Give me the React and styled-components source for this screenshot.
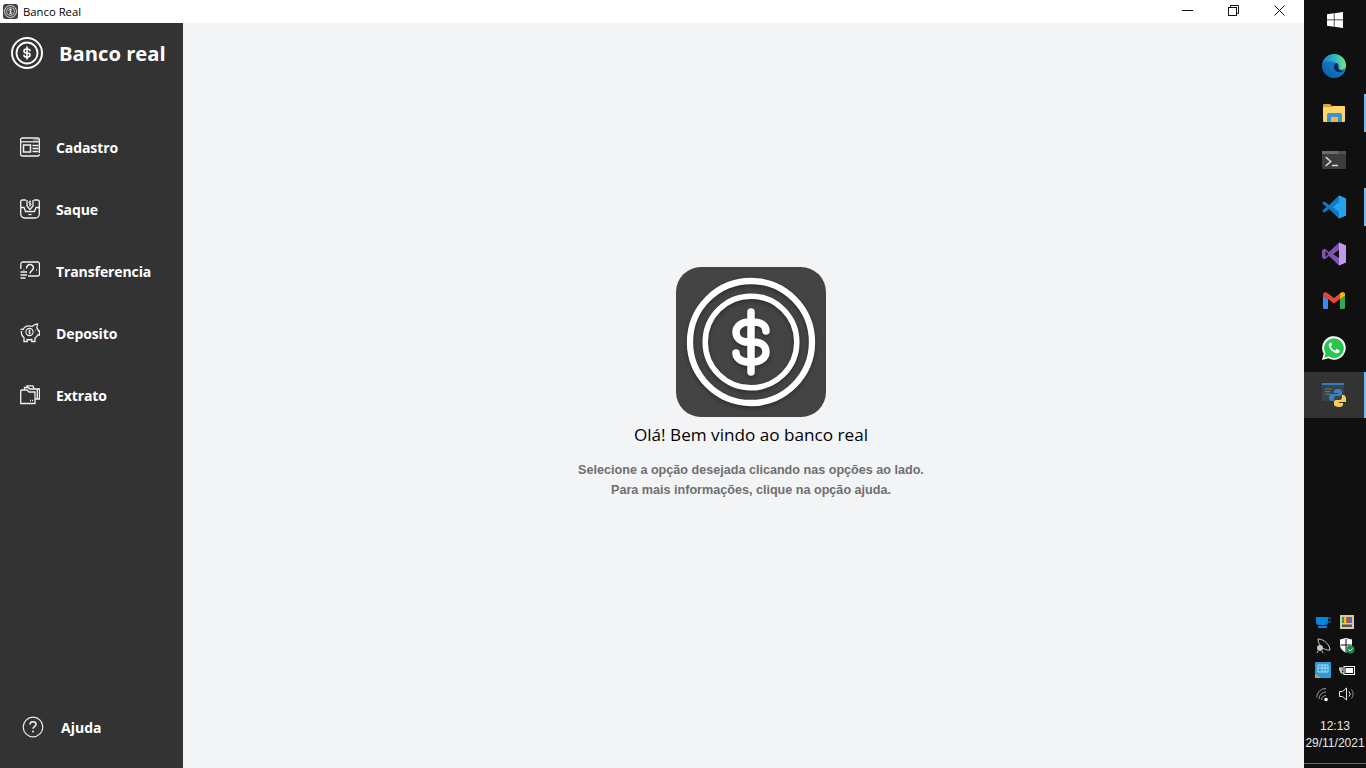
import React from "react";
import styled, { createGlobalStyle } from "styled-components";

const GlobalStyle = createGlobalStyle`
  html, body {
    margin: 0;
    padding: 0;
    width: 1366px;
    height: 768px;
    overflow: hidden;
  }
  * { box-sizing: border-box; }
`;

const Desktop = styled.div`
  display: flex;
  width: 1366px;
  height: 768px;
  font-family: "Open Sans", "Liberation Sans", sans-serif;
`;

const Window = styled.div`
  display: flex;
  flex-direction: column;
  flex: 1;
  min-width: 0;
`;

const TitleBar = styled.div`
  display: flex;
  align-items: center;
  height: 23px;
  padding: 0 2px 0 3px;
  background: #fff;
`;

const TitleIcon = styled.svg`
  width: 15px;
  height: 15px;
  margin-right: 5px;
`;

const TitleText = styled.span`
  flex: 1;
  font-size: 11.3px;
  color: #000;
`;

const WinButton = styled.div`
  display: flex;
  align-items: center;
  justify-content: center;
  width: 46px;
  height: 23px;
  margin-top: -3px;
`;

const WinGlyph = styled.svg`
  width: 11px;
  height: 11px;
  fill: none;
  stroke: #111;
`;

const Body = styled.div`
  display: flex;
  flex: 1;
  min-height: 0;
`;

const Sidebar = styled.aside`
  display: flex;
  flex-direction: column;
  width: 183px;
  background: #333333;
  color: #fff;
`;

const Brand = styled.div`
  display: flex;
  align-items: center;
  gap: 16px;
  height: 60px;
  padding-left: 11px;
  font-size: 20.2px;
  font-weight: 700;
  margin-bottom: 33px;
`;

const Nav = styled.nav`
  display: flex;
  flex-direction: column;
  flex: 1;
`;

const NavItem = styled.div`
  display: flex;
  align-items: center;
  gap: 16px;
  height: 62px;
  padding-left: 20px;
  font-size: 14px;
  font-weight: 700;
  letter-spacing: -0.1px;
`;

const Help = styled.div`
  display: flex;
  align-items: center;
  gap: 17px;
  height: 62px;
  margin-bottom: 10px;
  padding-left: 22px;
  font-size: 14px;
  font-weight: 700;
`;

const Main = styled.main`
  display: flex;
  flex-direction: column;
  align-items: center;
  flex: 1;
  padding: 244px 0 0 15px;
  background: #f3f4f6;
`;

const LogoTile = styled.div`
  width: 150px;
  height: 150px;
  border-radius: 25px;
  background: #444444;
`;

const Heading = styled.h1`
  margin: 6px 0 14px;
  font-size: 17.150px;
  line-height: 23px;
  font-weight: 400;
  color: #000;
`;

const Sub = styled.p`
  margin: 0;
  font-family: "Liberation Sans", sans-serif;
  font-size: 12.6px;
  line-height: 20px;
  font-weight: 700;
  color: #6f6f6f;
  text-align: center;
`;

const Taskbar = styled.div`
  display: flex;
  flex-direction: column;
  width: 62px;
  background: #101010;
  position: relative;
`;

const StartSlot = styled.div`
  display: flex;
  align-items: center;
  justify-content: center;
  height: 42px;
  padding-bottom: 3px;
`;

const Slot = styled.div`
  display: flex;
  align-items: center;
  justify-content: center;
  height: ${(p) => (p.$active ? "46px" : "47px")};
  margin-top: ${(p) => (p.$active ? "1px" : "0")};
  background: ${(p) => (p.$active ? "#333333" : "transparent")};
  border-right: 2px solid transparent;
  position: relative;
  &::after {
    content: "";
    display: ${(p) => (p.$open ? "block" : "none")};
    position: absolute;
    right: -2px;
    top: ${(p) => (p.$active ? "0" : "5px")};
    bottom: ${(p) => (p.$active ? "0" : "4px")};
    width: 2px;
    background: #76b9ed;
  }
`;

const Tray = styled.div`
  display: grid;
  grid-template-columns: 24px 24px;
  grid-auto-rows: 24px;
  justify-content: center;
  justify-items: center;
  align-items: center;
  margin-top: auto;
`;

const Clock = styled.div`
  margin-top: 12px;
  margin-bottom: 16px;
  text-align: center;
  font-family: "Liberation Sans", sans-serif;
  font-size: 12px;
  line-height: 17px;
  color: #e8e8e8;
  white-space: nowrap;
`;

const DesktopEdge = styled.div`
  position: absolute;
  left: 0;
  right: 0;
  bottom: 4px;
  height: 1px;
  background: #6a6a6a;
`;

const DOLLAR =
  "M90 64C90 58 84 55 77 55H73C65 55 60 60 60 65 60 71 65 75 72 75H78C85 75 90 79 90 85 90 90 85 95 77 95H73C65 95 60 91 60 86M75 45V105";

const CoinSmall = () => (
  <svg width="32" height="32" viewBox="0 0 32 32" fill="none" stroke="#fff">
    <circle cx="16" cy="16" r="15" strokeWidth="2" />
    <circle cx="16" cy="16" r="10.5" strokeWidth="1.8" />
    <path
      d={DOLLAR}
      transform="translate(16 16) scale(.2) translate(-75 -75)"
      strokeWidth="8"
      strokeLinecap="round"
    />
  </svg>
);

const CoinLarge = () => (
  <svg width="150" height="150" viewBox="0 0 150 150" fill="none" stroke="#fff">
    <g style={{ filter: "drop-shadow(0 2px 2px rgba(0,0,0,.35))" }}>
      <circle cx="75" cy="75" r="61" strokeWidth="6.3" />
      <circle cx="75" cy="75" r="45.800" strokeWidth="5.500" />
      <path d={DOLLAR} strokeWidth="7.500" strokeLinecap="round" />
    </g>
  </svg>
);

const MiniLogo = () => (
  <TitleIcon viewBox="0 0 15 15">
    <rect width="15" height="15" rx="2.500" fill="#444" />
    <g fill="none" stroke="#ddd">
      <circle cx="7.500" cy="7.500" r="6" strokeWidth="1" />
      <circle cx="7.500" cy="7.500" r="4" strokeWidth=".8" />
    </g>
    <path d="M7.500 4.500v6M9 6c-1-1-3-.8-3 .4s3 1 3 2.200-2 1.400-3 .4" fill="none" stroke="#eee" strokeWidth=".8" />
  </TitleIcon>
);

const NavIcon = styled.svg`
  width: 20px;
  height: 20px;
  fill: none;
  stroke: #f2f2f2;
  stroke-width: 1.300;
  flex: none;
`;

const CadastroIcon = () => (
  <NavIcon viewBox="0 0 20 20">
    <path d="M19.400 16V2.800A1.800 1.800 0 0 0 17.600 1H2.400A1.800 1.800 0 0 0 .6 2.800v14.400A1.800 1.800 0 0 0 2.400 19h15.200a1.800 1.800 0 0 0 1.800-1.800" />
    <path d="M.6 4.800h18.800" />
    <path d="M13.500 2.900h1M15.500 2.900h1M17.300 2.900h1" />
    <rect x="3.500" y="8" width="7" height="7" strokeWidth="1.500" />
    <path d="M12.500 8.500h6M12.500 11.500h6M12.500 14.500h6" strokeWidth="1.400" />
  </NavIcon>
);

const SaqueIcon = () => (
  <NavIcon viewBox="0 0 20 20">
    <path d="M6 1H2.500A1.800 1.800 0 0 0 .7 2.800V15a4 4 0 0 0 4 4h10.600a4 4 0 0 0 4-4V2.800A1.800 1.800 0 0 0 17.500 1H14" />
    <path d="M.7 8.500H4l1.500 4h9l1.500-4h3.300" />
    <path d="M7 1v6l3 3.500L13 7V1" />
    <path d="M11.200 3c-.8-.8-2.400-.5-2.400.5s2.400.8 2.400 1.800-1.600 1.200-2.400.5M10 1.500v6" strokeWidth="1" />
    <path d="M8.500 15.500h3" />
  </NavIcon>
);

const TransferIcon = () => (
  <NavIcon viewBox="0 0 20 20">
    <path d="M.8 8V3a2 2 0 0 1 2-2h14.700a2 2 0 0 1 2 2v10a2 2 0 0 1-2 2H8" />
    <path d="M6.700 7.500a3.300 3.300 0 0 1 3.300-4 3.300 3.300 0 0 1 3.400 3.500c0 2.200-3.400 2.800-3.400 5.500" strokeWidth="1.500" />
    <path d="M3.500 9h.8M16.200 9h.8" strokeWidth="1.400" />
    <path d="M.5 11h6.500M.5 14h6.500M.5 17h5" strokeWidth="1.500" />
  </NavIcon>
);

const DepositoIcon = () => (
  <NavIcon viewBox="0 0 20 20">
    <path d="M3 6.500C5 3 9 2.500 12 3.500 13.500 2 16 1 17.500.8l-.7 4.200c.8.8 1.400 1.800 1.700 3h1v4h-1.800c-.6 1.300-1.500 2.200-2.700 3v3.500h-3.200v-2c-1.400.3-3.200.3-4.600 0v2H4v-3.800C2 13 1 10.500 1.500 8" />
    <path d="M.5 6c1 .5 2 .5 3 .5" />
    <circle cx="9.500" cy="9" r="3.600" strokeWidth="1.100" />
    <path d="M10.700 7.800c-.6-.5-2.200-.4-2.200.5s2.200.7 2.200 1.600-1.600 1-2.200.5M9.500 6.500v5" strokeWidth=".8" />
    <path d="M15 7.300h.6" />
  </NavIcon>
);

const ExtratoIcon = () => (
  <NavIcon viewBox="0 0 20 20">
    <path d="M.7 18.500V6a1 1 0 0 1 1-1H7l2 2h6v11.500z" />
    <path d="M4.500 5V2.500h4l1.200 1.500h9.800v10H15" />
    <path d="M7 2.500V.8h6l1 3.200" />
    <path d="M17.300 4v10" />
    <path d="M10 15.500h1M12 15.500h1" />
  </NavIcon>
);

const HelpIcon = () => (
  <svg width="22" height="22" viewBox="0 0 22 22" fill="none" stroke="#eee">
    <circle cx="11" cy="11" r="9.800" strokeWidth="1.200" />
    <path d="M8 8.500a3 3 0 0 1 3-2.700c1.800 0 3 1.100 3 2.500 0 2.200-3 2.400-3 4.500" strokeWidth="1.600" />
    <circle cx="11" cy="15.500" r="1" fill="#eee" stroke="none" />
  </svg>
);

const WindowsLogo = () => (
  <svg width="16" height="16" viewBox="0 0 16 16" fill="#fff">
    <path d="M0 2.300 6.800 1.300v6.300H0zM7.500 1.200 16 0v7.600H7.500zM0 8.300h6.800v6.400L0 13.700zM7.500 8.300H16V16l-8.500-1.200z" />
  </svg>
);

const EdgeIcon = () => (
  <svg width="24" height="24" viewBox="0 0 24 24">
    <defs>
      <linearGradient id="edgeA" x1="0" y1="1" x2="1" y2="0">
        <stop offset="0" stopColor="#0a55a0" />
        <stop offset="1" stopColor="#1f9be3" />
      </linearGradient>
      <linearGradient id="edgeB" x1="0" y1="0.5" x2="1" y2="0.5">
        <stop offset="0" stopColor="#1a78c8" />
        <stop offset=".6" stopColor="#35c0c0" />
        <stop offset="1" stopColor="#84e36a" />
      </linearGradient>
    </defs>
    <circle cx="12" cy="12" r="12" fill="url(#edgeA)" />
    <path d="M.3 10C1.500 4 6.500 0 12 0c6.500 0 12 5 12 11.500 0 2.500-2 4-4.500 4-1 0-2-.3-2.500-.8 1-1.500.5-3.700-1-5C13 7.500 5 5.500.3 10z" fill="url(#edgeB)" />
    <path d="M15 9C12 9.500 11 13 13 16 15 19 19 19 22 16.500 19 17 16.500 16 16 14 15.500 12 16.500 11 15 9z" fill="#0c2350" />
  </svg>
);

const FolderIcon = () => (
  <svg width="22" height="18" viewBox="0 0 22 18">
    <path d="M0 1a1 1 0 0 1 1-1h6l2 2h12a1 1 0 0 1 1 1v2H0z" fill="#d9a130" />
    <path d="M0 3h9l1-1h11a1 1 0 0 1 1 1v14a1 1 0 0 1-1 1H1a1 1 0 0 1-1-1z" fill="#fbd768" />
    <path d="M4 18V11a2 2 0 0 1 2-2h11a2 2 0 0 1 2 2v7z" fill="#3f8fd8" />
    <rect x="8" y="13" width="7" height="5" fill="#f3b63d" />
  </svg>
);

const TerminalIcon = () => (
  <svg width="24" height="18" viewBox="0 0 24 18">
    <rect width="24" height="18" rx="1" fill="#3c3c3c" />
    <rect width="16" height="3" fill="#6c6c6c" />
    <rect x="16" width="8" height="3" fill="#525252" />
    <path d="M3.700 6l5 4.500-5 4.500" fill="none" stroke="#d8d8d8" strokeWidth="1.600" />
    <path d="M10 14.500h6" stroke="#d8d8d8" strokeWidth="1.500" />
  </svg>
);

const VSCodeIcon = () => (
  <svg width="24" height="24" viewBox="0 0 24 24">
    <path d="M17 .5 24 3.500v17L17 23.500 7 14l-4.500 3.500L0 16l4.500-4L0 8l2.500-1.500L7 10z" fill="#0e7bc4" />
    <path d="M17 .5 24 3.500v17L17 23.500V17l-6-5 6-5z" fill="#23a3ef" />
  </svg>
);

const VSIcon = () => (
  <svg width="24" height="24" viewBox="0 0 24 24">
    <path d="M17 .5 24 3.500v17L17 23.500 7 14l-4.500 3.500L0 15.500v-7L2.500 6.500 7 10z" fill="#7d53b4" />
    <path d="M17 .5 24 3.500v17L17 23.500V17l-6-5 6-5z" fill="#c09ae8" />
    <path d="M3.500 9v6l3-3z" fill="#101010" />
    <path d="M17 7.500v9l-6-4.500z" fill="#101010" />
  </svg>
);

const GmailIcon = () => (
  <svg width="22" height="17" viewBox="0 0 22 17">
    <path d="M0 3.500V15.500A1.500 1.500 0 0 0 1.500 17H5V7z" fill="#4285f4" />
    <path d="M17 7v10h3.500a1.500 1.500 0 0 0 1.500-1.500V3.500z" fill="#34a853" />
    <path d="M0 3.500 0 2.500C0 .5 2.500-.5 4 .8L11 6l7-5.200C19.500-.5 22 .5 22 2.500v1L17 7 11 11.500 5 7z" fill="#ea4335" />
    <path d="M17 7V1.500l1-.700C19.500-.5 22 .5 22 2.500v1z" fill="#fbbc04" />
  </svg>
);

const WhatsappIcon = () => (
  <svg width="24" height="24" viewBox="0 0 24 24">
    <path d="M0 24l1.700-6.200A11.800 11.800 0 1 1 6.300 22.300z" fill="#fff" />
    <path d="M2.300 21.700l1.200-4.300A9.900 9.900 0 1 1 6.700 20.600z" fill="#2ac54f" />
    <path d="M8.800 6.500c-.5 0-1.300.4-1.700 1.300-.7 1.600-.2 3.400 1.200 5.200 1.500 2 3.500 3.600 5.600 4.100 1.600.4 3.300-.4 3.600-1.700.2-.7.1-1.100 0-1.200l-2.500-1.200c-.3-.1-.5 0-.6.200l-.9 1.100c-.2.200-.4.200-.6.100-1.700-.7-3-1.800-3.900-3.500-.1-.2-.1-.4.100-.6l.7-.9c.1-.2.100-.4 0-.6L9.700 7c-.2-.4-.5-.5-.9-.5z" fill="#fff" />
  </svg>
);

const PythonAppIcon = () => (
  <svg width="24" height="24" viewBox="0 0 24 24">
    <rect x="0" y="0" width="22" height="18" fill="#3b4248" />
    <rect x="0" y="0" width="22" height="2" fill="#2d7fc1" />
    <path d="M3 6h7M3 8.500h5M3 11h6" stroke="#59875b" strokeWidth="1" />
    <path d="M16 6c-3 0-4 1-4 2.500V10h4v1H10c-2 0-3 1.500-3 3.500s1 3.500 3 3.500h2v-2.500c0-1.500 1-2.500 2.500-2.500h3.500c1.200 0 2-1 2-2V8.500C20 7 19 6 16 6z" fill="#3f7fc0" />
    <path d="M17 24c3 0 4-1 4-2.500V20h-4v-1h6c2 0 1-2 1-3.500S23 12 21 12h-1v2.500c0 1.500-1 2.500-2.500 2.500H14c-1.200 0-2 1-2 2v2.500c0 1.500 2 2.500 5 2.500z" fill="#f5cf55" />
  </svg>
);

const CupIcon = () => (
  <svg width="15" height="11" viewBox="0 0 15 11">
    <path d="M0 0h12v5a3 3 0 0 1-3 3H3a3 3 0 0 1-3-3z" fill="#0a84d8" />
    <path d="M12 1h1.500a1.500 1.500 0 0 1 0 4H12" fill="none" stroke="#0a84d8" />
    <rect x="2" y="9" width="9" height="2" fill="#0a84d8" />
  </svg>
);

const PaletteIcon = () => (
  <svg width="14" height="14" viewBox="0 0 14 14">
    <rect width="14" height="14" fill="#d5c9a8" />
    <rect x="2" y="2" width="10" height="6" fill="#2f9e4f" />
    <rect x="4" y="2" width="2.500" height="6" fill="#e8c52b" />
    <rect x="6.500" y="2" width="2.500" height="6" fill="#d8442e" />
    <rect x="9" y="2" width="3" height="6" fill="#3876c8" />
    <rect x="2" y="9.500" width="10" height="2.500" fill="#555" />
  </svg>
);

const SatelliteIcon = () => (
  <svg width="16" height="16" viewBox="0 0 16 16" fill="none" stroke="#c8c8c8">
    <path d="M3 1c6 0 12 6 12 11C9 13 3 7 3 1z" strokeWidth="1" />
    <circle cx="5" cy="10" r="3" fill="#c8c8c8" stroke="none" />
    <path d="M3 13l-1 2M7 13l1 2" />
  </svg>
);

const ShieldIcon = () => (
  <svg width="16" height="16" viewBox="0 0 16 16">
    <path d="M7 0l6 1.500V7c0 3.500-2.500 6-6 7.500C3.500 13 1 10.500 1 7V1.500z" fill="#fff" />
    <path d="M7 1v13M1.500 7h11" stroke="#101010" strokeWidth="1" />
    <circle cx="11.500" cy="11.500" r="4" fill="#1a8f48" />
    <path d="M9.500 11.500l1.500 1.500 2.500-2.500" fill="none" stroke="#fff" strokeWidth="1" />
  </svg>
);

const IntelIcon = () => (
  <svg width="16" height="16" viewBox="0 0 16 16">
    <rect width="16" height="16" rx="1" fill="#2e9bd6" />
    <path d="M3 3h10v7H3zM3 6h10M7 3v7M10 3v7" fill="none" stroke="#cfeefc" strokeWidth=".8" />
    <path d="M0 12l6 4H1a1 1 0 0 1-1-1z" fill="#e89b2c" />
  </svg>
);

const BatteryIcon = () => (
  <svg width="16" height="12" viewBox="0 0 16 12" fill="none" stroke="#fff">
    <rect x="5" y="2.500" width="10.500" height="8" strokeWidth="1" />
    <rect x="6.500" y="4" width="7.500" height="5" fill="#fff" stroke="none" />
    <path d="M0 5h3M1 3v4h2V3M2 7v2h3" strokeWidth="1" />
  </svg>
);

const WifiIcon = () => (
  <svg width="15" height="15" viewBox="0 0 15 15" fill="none" stroke="#9a9a9a">
    <path d="M.7 10.500A9 9 0 0 1 10 1.500M3 12a7 7 0 0 1 7-7M5.500 13A4.500 4.500 0 0 1 10 8.500" strokeWidth="1" />
    <circle cx="10" cy="12.500" r="1.800" fill="#fff" stroke="none" />
  </svg>
);

const SpeakerIcon = () => (
  <svg width="16" height="14" viewBox="0 0 16 14" fill="none" stroke="#e8e8e8">
    <path d="M.5 4.500h3L7.500 1v12l-4-3.500h-3z" strokeWidth="1" />
    <path d="M10 4.500a3.500 3.500 0 0 1 0 5" />
    <path d="M12.500 2.500a7 7 0 0 1 0 9" stroke="#8a8a8a" />
  </svg>
);

const navItems = [
  { label: "Cadastro", icon: <CadastroIcon /> },
  { label: "Saque", icon: <SaqueIcon /> },
  { label: "Transferencia", icon: <TransferIcon /> },
  { label: "Deposito", icon: <DepositoIcon /> },
  { label: "Extrato", icon: <ExtratoIcon /> },
];

const App = () => (
  <>
    <GlobalStyle />
    <Desktop>
      <Window>
        <TitleBar>
          <MiniLogo />
          <TitleText>Banco Real</TitleText>
          <WinButton>
            <WinGlyph viewBox="0 0 11 11">
              <path d="M0 5.500h11" />
            </WinGlyph>
          </WinButton>
          <WinButton>
            <WinGlyph viewBox="0 0 11 11">
              <rect x=".5" y="2.500" width="8" height="8" />
              <path d="M2.500 2.500V.5h8v8h-2" />
            </WinGlyph>
          </WinButton>
          <WinButton>
            <WinGlyph viewBox="0 0 11 11">
              <path d="M.5.5l10 10M10.500.5l-10 10" />
            </WinGlyph>
          </WinButton>
        </TitleBar>
        <Body>
          <Sidebar>
            <Brand>
              <CoinSmall />
              Banco real
            </Brand>
            <Nav>
              {navItems.map((item) => (
                <NavItem key={item.label}>
                  {item.icon}
                  {item.label}
                </NavItem>
              ))}
            </Nav>
            <Help>
              <HelpIcon />
              Ajuda
            </Help>
          </Sidebar>
          <Main>
            <LogoTile>
              <CoinLarge />
            </LogoTile>
            <Heading>Olá! Bem vindo ao banco real</Heading>
            <Sub>
              Selecione a opção desejada clicando nas opções ao lado.
              <br />
              Para mais informações, clique na opção ajuda.
            </Sub>
          </Main>
        </Body>
      </Window>
      <Taskbar>
        <StartSlot>
          <WindowsLogo />
        </StartSlot>
        <Slot><EdgeIcon /></Slot>
        <Slot $open><FolderIcon /></Slot>
        <Slot><TerminalIcon /></Slot>
        <Slot $open><VSCodeIcon /></Slot>
        <Slot><VSIcon /></Slot>
        <Slot><GmailIcon /></Slot>
        <Slot><WhatsappIcon /></Slot>
        <Slot $open $active><PythonAppIcon /></Slot>
        <Tray>
          <CupIcon />
          <PaletteIcon />
          <SatelliteIcon />
          <ShieldIcon />
          <IntelIcon />
          <BatteryIcon />
          <WifiIcon />
          <SpeakerIcon />
        </Tray>
        <Clock>
          12:13
          <br />
          29/11/2021
        </Clock>
        <DesktopEdge />
      </Taskbar>
    </Desktop>
  </>
);

export default App;
